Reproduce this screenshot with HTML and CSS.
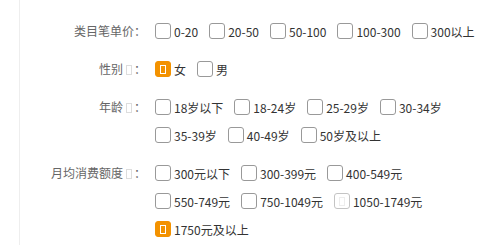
FILE: index.html
```html
<!DOCTYPE html>
<html lang="zh-CN">
<head>
<meta charset="utf-8">
<link rel="stylesheet" href="styles.css">
</head>
<body>
<div class="panel">
  <div class="row">
    <div class="label">类目笔单价：</div>
    <div class="opts">
      <label class="opt"><span class="cb"></span>0-20</label>
      <label class="opt"><span class="cb"></span>20-50</label>
      <label class="opt"><span class="cb"></span>50-100</label>
      <label class="opt"><span class="cb"></span>100-300</label>
      <label class="opt"><span class="cb"></span>300以上</label>
    </div>
  </div>
  <div class="row">
    <div class="label">性别<span class="tofu"></span>：</div>
    <div class="opts">
      <label class="opt"><span class="cb checked"><span class="mark"></span></span>女</label>
      <label class="opt"><span class="cb"></span>男</label>
    </div>
  </div>
  <div class="row">
    <div class="label">年龄<span class="tofu"></span>：</div>
    <div class="opts">
      <label class="opt"><span class="cb"></span>18岁以下</label>
      <label class="opt"><span class="cb"></span>18-24岁</label>
      <label class="opt"><span class="cb"></span>25-29岁</label>
      <label class="opt"><span class="cb"></span>30-34岁</label>
      <label class="opt"><span class="cb"></span>35-39岁</label>
      <label class="opt"><span class="cb"></span>40-49岁</label>
      <label class="opt"><span class="cb"></span>50岁及以上</label>
    </div>
  </div>
  <div class="row">
    <div class="label">月均消费额度<span class="tofu"></span>：</div>
    <div class="opts">
      <label class="opt"><span class="cb"></span>300元以下</label>
      <label class="opt"><span class="cb"></span>300-399元</label>
      <label class="opt"><span class="cb"></span>400-549元</label>
      <label class="opt"><span class="cb"></span>550-749元</label>
      <label class="opt"><span class="cb"></span>750-1049元</label>
      <label class="opt"><span class="cb faint"><span class="mark"></span></span>1050-1749元</label>
      <label class="opt"><span class="cb checked"><span class="mark"></span></span>1750元及以上</label>
    </div>
  </div>
</div>
</body>
</html>
```
FILE: styles.css
```css
html, body {
  margin: 0;
  padding: 0;
  background: #fff;
}
body {
  font-family: "Noto Sans CJK SC", sans-serif;
  font-size: 12px;
  color: #333;
}
.panel {
  margin-left: 19px;
  border-left: 1px solid #eee;
  height: 245px;
  box-sizing: border-box;
  padding-top: 17px;
}
.row {
  display: flex;
  align-items: flex-start;
  margin-bottom: 10px;
}
.label {
  width: 126px;
  flex: none;
  text-align: right;
  line-height: 28px;
  color: #666;
  white-space: nowrap;
}
.tofu {
  display: inline-block;
  width: 6px;
  height: 10px;
  box-sizing: border-box;
  border: 1px solid #ddd;
  margin: 0 2px 0 3px;
  vertical-align: -1px;
}
.opts {
  margin-left: 9px;
  width: 330px;
  display: flex;
  flex-wrap: wrap;
  column-gap: 11px;
}
.opt {
  display: flex;
  align-items: center;
  height: 28px;
  white-space: nowrap;
}
.cb {
  width: 16px;
  height: 16px;
  box-sizing: border-box;
  border: 1px solid #999;
  border-radius: 3px;
  margin-right: 3px;
  background: #fff;
  display: flex;
  align-items: center;
  justify-content: center;
}
.cb.checked {
  background: #f39200;
  border-color: #f39200;
}
.mark {
  width: 6px;
  height: 9px;
  box-sizing: border-box;
  border: 1px solid #fff;
}
.cb.faint {
  border-color: #c4c4c4;
}
.cb.faint .mark {
  border-color: #ededed;
}
```
